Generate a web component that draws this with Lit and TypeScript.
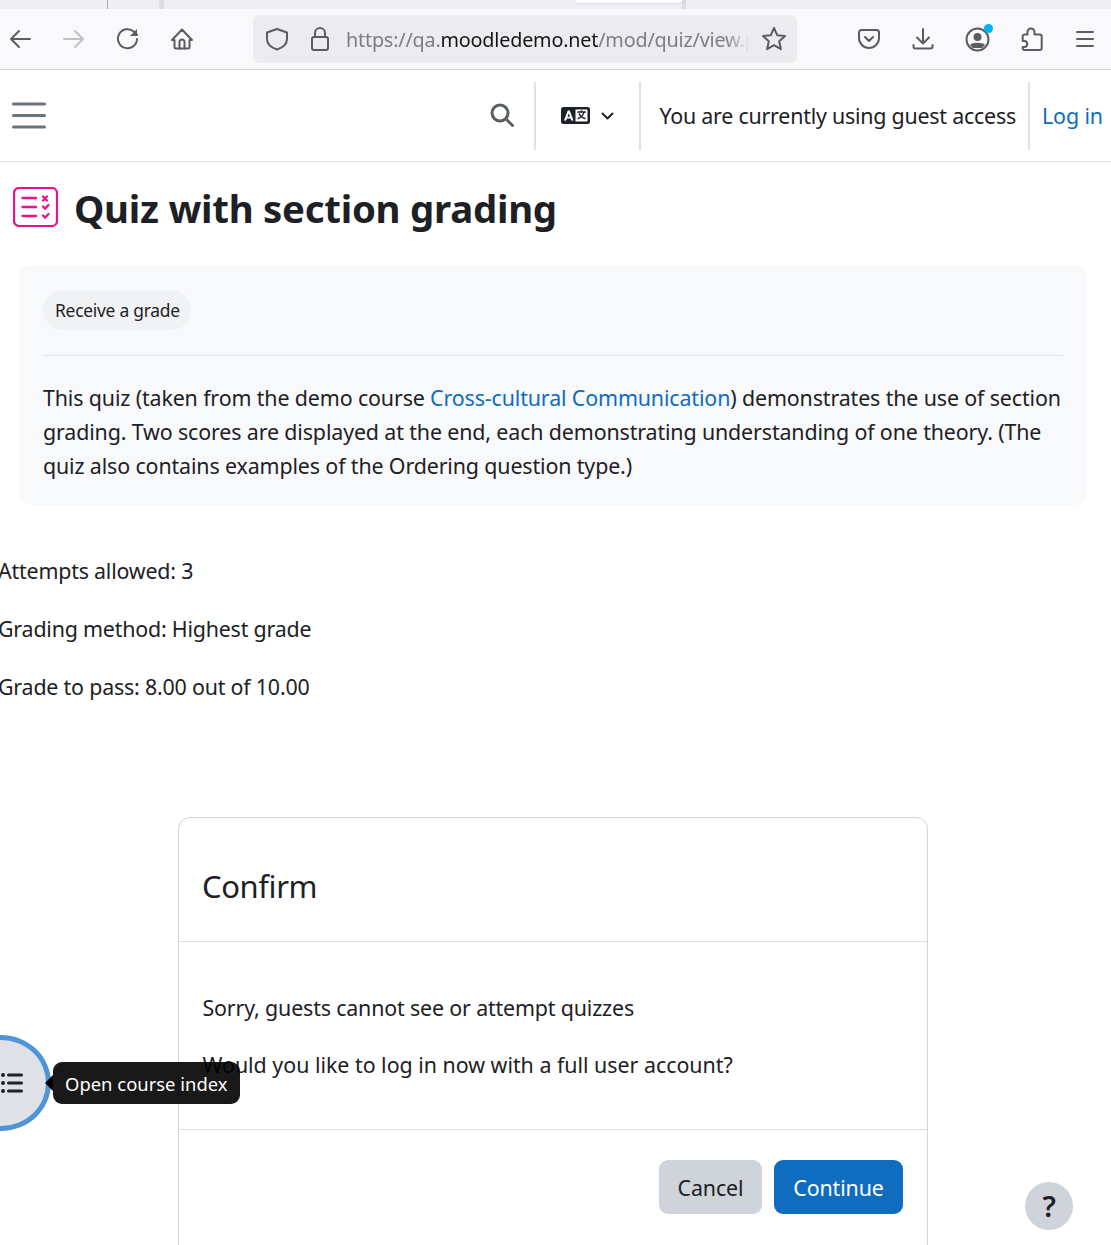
import { LitElement, html, css, svg } from "lit";
import { customElement } from "lit/decorators.js";

const ic = (w: number, h: number, vb: string, body: unknown, cls = "") =>
  html`<svg class=${cls} width=${w} height=${h} viewBox=${vb} fill="none" stroke="currentColor" stroke-width="2" stroke-linecap="round" stroke-linejoin="round">${body}</svg>`;

@customElement("app-root")
export class AppRoot extends LitElement {
  static styles = css`
    :host {
      display: block;
      width: 1111px;
      height: 1245px;
      overflow: hidden;
      position: relative;
      background: #fff;
      font-family: "Noto Sans", "Open Sans", sans-serif;
      font-size: 21.4px;
      letter-spacing: -0.13px;
      line-height: 34px;
      color: #1d2125;
    }
    svg { display: block; flex: none; }
    .tabs { height: 9px; background: #eeeef3; position: relative; }
    .tab-sep { position: absolute; top: 0; height: 9px; }
    .sep1 { left: 107px; width: 1px; background: #a8a8ae; }
    .sep2 { left: 159px; width: 5px; background: #dcdce0; }
    .active-tab { position: absolute; left: 575px; top: 0; width: 107px; height: 3px; background: #fff; border-radius: 0 0 4px 4px; box-shadow: 0 0 2px rgba(0,0,0,.25); }
    .sep3 { left: 682px; width: 4px; background: #dcdce0; }
    .toolbar {
      height: 60px; background: #f9f9fb; border-bottom: 1px solid #cfcfd4;
      display: flex; align-items: center; color: #5b5b66; box-sizing: content-box;
    }
    .nav { display: flex; align-items: center; margin-left: 8px; gap: 30px; }
    .nav .fwd { color: #bfbfc4; }
    .urlbar {
      margin-left: 59px; width: 544px; height: 48px; background: #ececee; border-radius: 6px;
      display: flex; align-items: center; box-sizing: border-box; padding: 0 10px 0 12px;
    }
    .lock { margin-left: 21px; }
    .url {
      margin-left: 16px; width: 404px; overflow: hidden; white-space: nowrap; font-size: 19.8px; letter-spacing: -0.2px; color: #7d7d85;
      line-height: 50px; height: 48px; flex: none; -webkit-mask-image: linear-gradient(90deg, #000 94%, transparent 100%); mask-image: linear-gradient(90deg, #000 94%, transparent 100%);
    }
    .url b { font-weight: 400; color: #15141a; }
    .star { margin-left: auto; }
    .tools { display: flex; align-items: center; margin-left: 60px; gap: 30px; }
    .acct { position: relative; }
    .dot { position: absolute; right: -3px; top: -3px; width: 9px; height: 9px; border-radius: 50%; background: #00b3f4; }
    .navbar {
      height: 91px; border-bottom: 1px solid #dee2e6; display: flex; align-items: center; padding: 0 8px 0 12px;
    }
    .burger { color: #6a737b; margin-top: -1px; }
    .search { margin-left: auto; color: #5a5f64; margin-right: 20px; margin-top: -1px; }
    .div { width: 2px; height: 68px; background: #dee2e6; flex: none; }
    .lang { display: flex; align-items: center; gap: 11px; margin: 0 25px; }
    .guest { margin: 0 12px 0 18px; white-space: nowrap; letter-spacing: -0.22px; }
    .login { margin-left: 12px; color: #0f6cbf; white-space: nowrap; letter-spacing: -0.1px; }
    .title { display: flex; align-items: center; height: 94px; margin-left: 13px; gap: 16px; padding-bottom: 3px; box-sizing: border-box; }
    .title svg { margin-top: -2px; }
    h1 { margin: 0; font-size: 38.4px; font-weight: 700; line-height: 46px; letter-spacing: -0.26px; }
    .box {
      margin: 9px 24px 0 19px; height: 240px; box-sizing: border-box; background: #f8f9fa; border-radius: 12px; padding: 25px 24px 0;
    }
    .pill {
      display: inline-block; height: 40px; line-height: 40px; padding: 0 11px 0 12px; border-radius: 20px; background: #f1f2f3;
      font-size: 17.4px; letter-spacing: -0.25px; vertical-align: top;
    }
    .box hr { border: 0; border-top: 1px solid #dee2e6; margin: 25px 0 0; }
    .box p { margin: 25px 0 0; }
    a { color: #0f6cbf; text-decoration: none; }
    .meta { margin: 49px 0 0 -2px; letter-spacing: -0.2px; }
    .meta div { height: 34px; margin-bottom: 24px; white-space: nowrap; }
    .dialog {
      margin: 113px 0 0 178px; width: 750px; height: 500px; box-sizing: border-box; border: 1px solid #ced4da; border-radius: 12px;
    }
    .dlg-head { height: 124px; border-bottom: 1px solid #dee2e6; display: flex; align-items: center; padding: 12px 23px 0; box-sizing: border-box; }
    .dlg-head h2 { margin: 0; font-size: 31px; font-weight: 400; letter-spacing: -0.4px; line-height: 40px; }
    .dlg-body { height: 187px; border-bottom: 1px solid #dee2e6; box-sizing: content-box; padding: 0 23.5px; overflow: hidden; }
    .dlg-body p { margin: 0 0 23px; }
    .dlg-body p:first-child { margin-top: 49px; letter-spacing: -0.16px; }
    .dlg-body p.wide { letter-spacing: -0.01px; }
    .dlg-foot { display: flex; justify-content: flex-end; gap: 12px; padding: 30px 24px 0; }
    .btn { height: 54px; line-height: 56px; border-radius: 9px; text-align: center; }
    .cancel { width: 103px; background: #ced4da; color: #1d2125; }
    .cont { width: 129px; background: #0f6cbf; color: #fff; }
    .fab {
      position: absolute; left: -49px; top: 1035px; width: 100px; height: 96px; box-sizing: border-box; border-radius: 50%;
      background: #dee2e6; border: 5px solid #4f94d4; display: flex; align-items: center; justify-content: flex-end; padding-right: 23px; color: #1d2125;
    }
    .tip {
      position: absolute; left: 53px; top: 1062px; width: 187px; height: 42px; box-sizing: border-box; border-radius: 9px; background: rgba(0,0,0,.9);
      color: #fff; font-size: 18.4px; letter-spacing: 0.02px; line-height: 44px; padding-left: 12px; white-space: nowrap;
    }
    .tip::before {
      content: ""; position: absolute; left: -8px; top: 13px; border-style: solid; border-width: 8px 8px 8px 0; border-color: transparent #000 transparent transparent;
    }
    .help {
      position: absolute; left: 1025px; top: 1182px; width: 48px; height: 48px; border-radius: 50%; background: #ced4da; text-align: center;
      line-height: 48px; font-weight: 600; font-size: 29px; color: #1d2125;
    }
  `;

  render() {
    return html`
      <div class="tabs">
        <div class="tab-sep sep1"></div>
        <div class="tab-sep sep2"></div>
        <div class="active-tab"></div>
        <div class="tab-sep sep3"></div>
      </div>
      <div class="toolbar">
        <div class="nav">
          ${ic(24, 24, "0 0 24 24", svg`<path d="M22 12H3M11 4l-8 8 8 8"/>`)}
          ${ic(24, 24, "0 0 24 24", svg`<path d="M2 12h19M13 4l8 8-8 8"/>`, "fwd")}
          ${ic(24, 24, "0 0 24 24", svg`<path d="M21 12a9.500 9.500 0 1 1-3-7.200L21 8"/><path d="M21 2v7h-7" fill="currentColor" stroke="none"/>`)}
          ${ic(24, 24, "0 0 24 24", svg`<path d="M12 2.500 2 13h2.500v7a1.500 1.500 0 0 0 1.500 1.500h12a1.500 1.500 0 0 0 1.500-1.500v-7H22z"/><path d="M9.500 21.500V15a2.500 2.500 0 0 1 5 0v6.500"/>`)}
        </div>
        <div class="urlbar">
          ${ic(24, 24, "0 0 24 24", svg`<path d="M12 2 2 5.500V12c0 5 4 8.500 10 10.500 6-2 10-5.500 10-10.500V5.500z"/>`)}
          ${ic(20, 26, "0 0 20 26", svg`<rect x="2" y="11" width="16" height="13" rx="2"/><path d="M5 11V7a5 5 0 0 1 10 0v4"/>`, "lock")}
          <div class="url">https://qa.<b>moodledemo.net</b>/mod/quiz/view.php</div>
          ${ic(26, 26, "0 0 26 26", svg`<path d="m13 2 3.300 7.300 7.700.8-5.800 5.200 1.700 7.900L13 19.100 6.100 23.200l1.700-7.900L2 10.100l7.700-.8z"/>`, "star")}
        </div>
        <div class="tools">
          ${ic(24, 24, "0 0 24 24", svg`<path d="M4.500 3h15A2.500 2.500 0 0 1 22 5.500V11a10 10 0 0 1-20 0V5.500A2.500 2.500 0 0 1 4.500 3z"/><path d="m8 10 4 4 4-4"/>`)}
          ${ic(24, 24, "0 0 24 24", svg`<path d="M12 2v14M6 10.500l6 6 6-6M2.500 18v1.500A2 2 0 0 0 4.500 21.500h15a2 2 0 0 0 2-2V18"/>`)}
          <div class="acct">
            ${ic(25, 25, "0 0 25 25", svg`<circle cx="12.500" cy="12.500" r="11"/><circle cx="12.500" cy="10" r="4" fill="currentColor" stroke="none"/><path d="M5 18c2-3 13-3 15 0l-3 3H8z" fill="currentColor" stroke="none"/>`)}
            <div class="dot"></div>
          </div>
          ${ic(24, 24, "0 0 24 24", svg`<path d="M4.500 7.500H7.500V5a3.500 3.500 0 0 1 7 0V7.500H20a1.700 1.700 0 0 1 1.700 1.700V21.300a1.700 1.700 0 0 1-1.700 1.700H4.500a1.700 1.700 0 0 1-1.800-1.700V20h1.500a3 3 0 0 0 0-6H2.700V9.200A1.700 1.700 0 0 1 4.500 7.500z"/>`)}
          ${ic(20, 24, "0 0 20 24", svg`<path d="M3 5h16M3 12h16M3 19h16" stroke-width="2"/>`)}
        </div>
      </div>
      <div class="navbar">
        ${ic(35, 27, "0 0 35 27", svg`<path d="M1.500 2h31M1.500 13.500h31M1.500 25h31" stroke-width="3"/>`, "burger")}
        ${ic(24, 24, "0 0 24 24", svg`<circle cx="10" cy="10" r="8" stroke-width="3"/><path d="m16 16 6.500 6.500" stroke-width="3"/>`, "search")}
        <div class="div"></div>
        <div class="lang">
          <svg width="29" height="17" viewBox="0 0 29 17">
            <rect width="29" height="17" rx="2.500" fill="#1d2125"/>
            <rect x="14.500" y="2.500" width="12" height="12" fill="#fff"/>
            <path d="M3 13.500 6.800 3.500h1.900l3.800 10h-2.200l-.7-2H5.900l-.7 2zM6.500 9.800h2.500L7.800 6.300z" fill="#fff"/>
            <path d="M16.300 5h8.500M20.500 3.500V5M23 5c-.5 3-3 5.500-6.300 6.800M18 6.500c1 2.300 3 4.200 6.500 5.300" stroke="#1d2125" stroke-width="1.500" fill="none"/>
          </svg>
          ${ic(13, 8, "0 0 13 8", svg`<path d="m1.500 1.500 5 5 5-5"/>`)}
        </div>
        <div class="div"></div>
        <span class="guest">You are currently using guest access</span>
        <div class="div"></div>
        <a class="login">Log in</a>
      </div>
      <div class="title">
        <svg width="45" height="40" viewBox="0 0 45 40" fill="none" stroke="#f20d8c" stroke-linecap="round">
          <rect x="1" y="1" width="43" height="38" rx="5" stroke-width="2.200"/>
          <path d="M9.500 11h13.500M9.500 20h13.500M9.500 29h13.500" stroke-width="2.300"/>
          <path d="m30 9.500 4 4m0-4-4 4" stroke-width="2.300"/>
          <path d="m30 19.500 2 2 3.500-3.500M30 28.500l2 2 3.500-3.500" stroke-width="2.300"/>
        </svg>
        <h1>Quiz with section grading</h1>
      </div>
      <div class="box">
        <span class="pill">Receive a grade</span>
        <hr />
        <p>This quiz (taken from the demo course <a>Cross-cultural Communication</a>) demonstrates the use of section grading. Two scores are displayed at the end, each demonstrating understanding of one theory. (The quiz also contains examples of the Ordering question type.)</p>
      </div>
      <div class="meta">
        <div>Attempts allowed: 3</div>
        <div>Grading method: Highest grade</div>
        <div>Grade to pass: 8.00 out of 10.00</div>
      </div>
      <div class="dialog">
        <div class="dlg-head"><h2>Confirm</h2></div>
        <div class="dlg-body">
          <p>Sorry, guests cannot see or attempt quizzes</p>
          <p class="wide">Would you like to log in now with a full user account?</p>
        </div>
        <div class="dlg-foot">
          <div class="btn cancel">Cancel</div>
          <div class="btn cont">Continue</div>
        </div>
      </div>
      <div class="fab">
        ${ic(24, 20, "0 0 24 20", svg`<path d="M9.500 2h13M9.500 10h13M9.500 18h13" stroke-width="3"/><path d="M4 2h.01M4 10h.01M4 18h.01" stroke-width="4"/>`)}
      </div>
      <div class="tip">Open course index</div>
      <div class="help">?</div>
    `;
  }
}
